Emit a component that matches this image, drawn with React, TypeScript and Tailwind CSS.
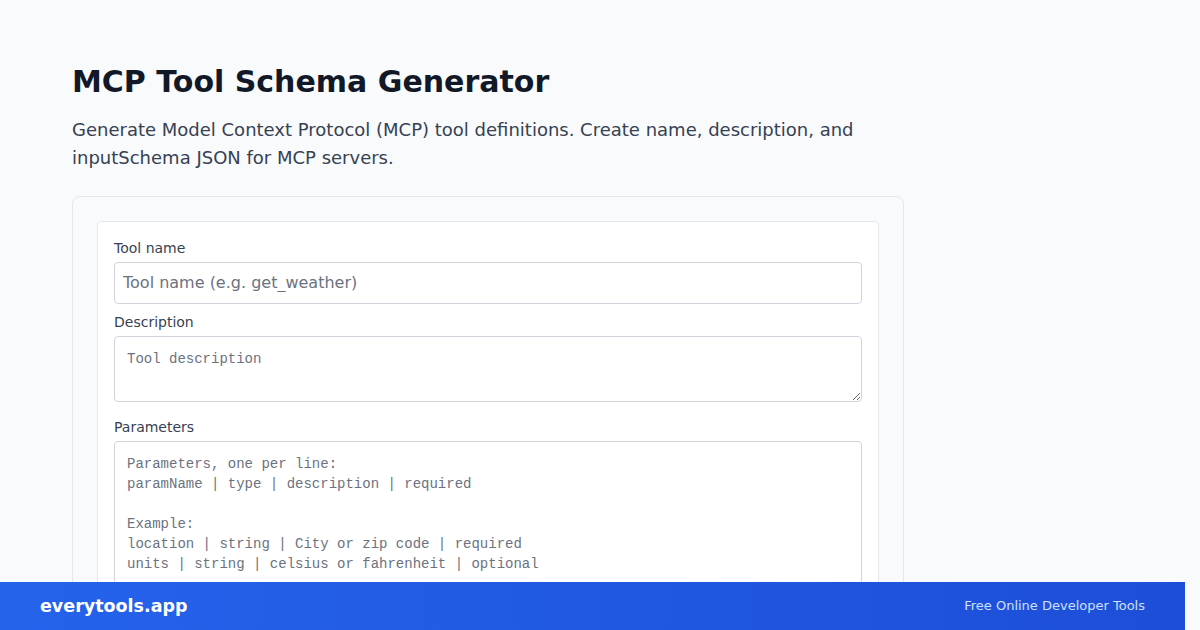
import React from "react";

const paramsPlaceholder = `Parameters, one per line:
paramName | type | description | required

Example:
location | string | City or zip code | required
units | string | celsius or fahrenheit | optional`;

const App = () => {
    return (
        <div className="min-h-screen bg-[#f8fafc] font-['DejaVu_Sans',sans-serif]">
            <main className="px-[72px] pt-[62px]">
                <div className="w-[832px]">
                    <h1 className="text-[30px] leading-[40px] font-bold text-[#111827]">MCP Tool Schema Generator</h1>
                    <p className="mt-[14px] text-[18px] leading-[28px] text-[#374151]">
                        Generate Model Context Protocol (MCP) tool definitions. Create name, description, and inputSchema JSON for MCP servers.
                    </p>

                    {/* Card */}
                    <div className="mt-[24px] rounded-lg border border-[#e5e7eb] bg-[#f9fafb] p-6">
                        <div className="rounded border border-[#e5e7eb] bg-white p-4">
                            <label className="block text-sm leading-5 text-[#374151]">Tool name</label>
                            <input
                                type="text"
                                placeholder="Tool name (e.g. get_weather)"
                                className="mt-1 block w-full rounded border border-[#d1d5db] px-2 py-2 text-[16px] leading-6 placeholder:text-[#6b7280]"
                            />

                            <label className="mt-2 block text-sm leading-5 text-[#374151]">Description</label>
                            <textarea
                                rows={2}
                                placeholder="Tool description"
                                className="mt-1 block w-full rounded border border-[#d1d5db] p-3 font-['Liberation_Mono',monospace] text-[14px] leading-5 placeholder:text-[#6b7280]"
                            />

                            <label className="mt-[15px] block text-sm leading-5 text-[#374151]">Parameters</label>
                            <textarea
                                rows={8}
                                placeholder={paramsPlaceholder}
                                className="mt-[4px] block w-full rounded border border-[#d1d5db] p-3 font-['Liberation_Mono',monospace] text-[14px] leading-5 placeholder:text-[#6b7280]"
                            />
                        </div>
                    </div>
                </div>
            </main>

            {/* Footer */}
            <footer className="fixed bottom-0 left-0 flex h-12 w-[1185px] items-center justify-between bg-gradient-to-r from-[#2563eb] to-[#1d4ed8] px-10">
                <span className="text-[17.5px] font-bold text-white">everytools.app</span>
                <span className="text-[13px] text-[#cfe0fd]">Free Online Developer Tools</span>
            </footer>
        </div>
    );
};

export default App;
